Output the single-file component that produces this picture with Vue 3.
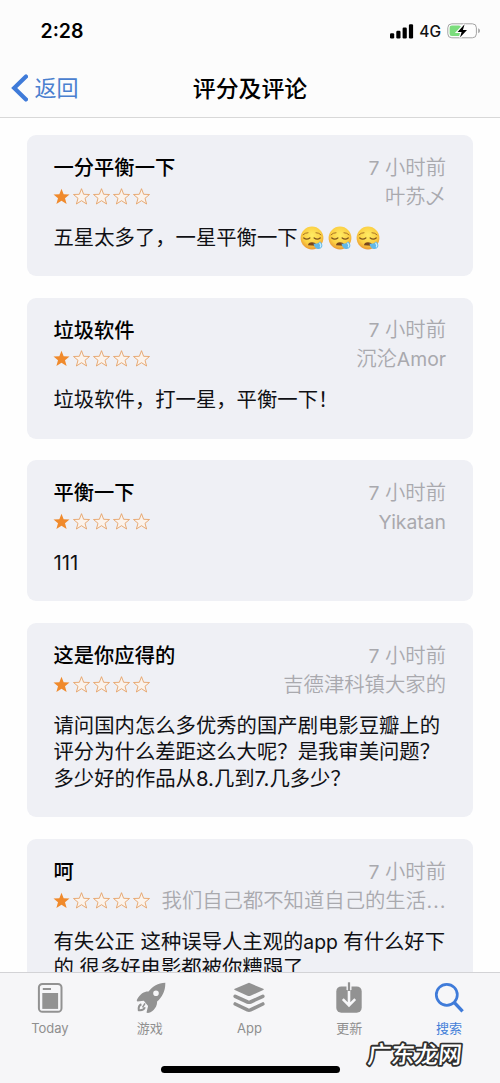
<script setup>
const star = 'M8 0.2 L10.15 5.8 L16 6 L11.5 9.8 L13.1 15.5 L8 12.2 L2.9 15.5 L4.5 9.8 L0 6 L5.85 5.8 Z'
const reviews = [
  { title: '一分平衡一下', author: '叶苏乄', lines: ['五星太多了，一星平衡一下'], faces: 3 },
  { title: '垃圾软件', author: '沉沦Amor', lines: ['垃圾软件，打一星，平衡一下！'], faces: 0 },
  { title: '平衡一下', author: 'Yikatan', lines: ['111'], faces: 0 },
  {
    title: '这是你应得的',
    author: '吉德津科镇大家的',
    lines: ['请问国内怎么多优秀的国产剧电影豆瓣上的', '评分为什么差距这么大呢？是我审美问题？', '多少好的作品从8.几到7.几多少？'],
    faces: 0,
  },
  {
    title: '呵',
    author: '我们自己都不知道自己的生活…',
    lines: ['有失公正 这种误导人主观的app 有什么好下', '的 很多好电影都被你糟蹋了'],
    faces: 0,
  },
]

// Latin words and the ellipsis are sized apart from the Chinese text around them.
function segments(text) {
  return text
    .split(/([A-Za-z]+ ?|…)/)
    .filter(Boolean)
    .map((t) => ({ t, kind: t === '…' ? 'dots' : /^[A-Za-z]/.test(t) ? 'latin' : '' }))
}
</script>

<template>
  <div class="screen">
    <header class="top">
      <div class="status">
        <span class="time">2:28</span>
        <div class="indicators">
          <svg class="signal" width="24" height="15" viewBox="0 0 24 15">
            <rect x="0" y="9.3" width="4.2" height="5.2" rx="1.2" />
            <rect x="6.3" y="6.8" width="4.2" height="7.7" rx="1.2" />
            <rect x="12.6" y="3.6" width="4.2" height="10.9" rx="1.2" />
            <rect x="18.9" y="0.2" width="4.2" height="14.3" rx="1.2" />
          </svg>
          <span class="network">4G</span>
          <svg class="battery" width="34" height="16" viewBox="0 0 34 16">
            <rect x="0.8" y="0.8" width="28.6" height="14" rx="4" fill="#fdfdfd" stroke="#a3a3a3" stroke-width="1" />
            <rect x="2.6" y="2.6" width="11.5" height="10.4" rx="2.2" fill="#7bdc7c" />
            <path d="M31.2 5.3 Q33 6 33 7.8 Q33 9.6 31.2 10.3 Z" fill="#a3a3a3" />
            <path d="M17.6 1.2 L10.6 8.9 H14.6 L13 14.4 L20 6.9 H15.9 Z" fill="#000" stroke="#fdfdfd" stroke-width="2.4" paint-order="stroke" />
          </svg>
        </div>
      </div>
      <nav class="nav">
        <div class="back">
          <svg width="18" height="28" viewBox="0 0 18 28">
            <path d="M16 2.6 L4.2 14 L16 25.4" fill="none" stroke="#3f7bd9" stroke-width="4.2" stroke-linecap="round" stroke-linejoin="miter" />
          </svg>
          <span>返回</span>
        </div>
        <h1>评分及评论</h1>
      </nav>
    </header>

    <main class="list">
      <article v-for="r in reviews" :key="r.title" class="card">
        <div class="row">
          <h2>{{ r.title }}</h2>
          <span class="meta"><span class="latin">7 </span>小时前</span>
        </div>
        <div class="row">
          <div class="stars">
            <svg v-for="n in 5" :key="n" width="17" height="17" viewBox="-0.5 -0.5 17 17">
              <path :d="star" :class="n === 1 ? 'full' : 'hollow'" />
            </svg>
          </div>
          <span class="meta"><span v-for="(s, i) in segments(r.author)" :key="i" :class="s.kind">{{ s.t }}</span></span>
        </div>
        <div class="body">
          <div v-for="line in r.lines" :key="line" class="line">
            <span class="copy"><span v-for="(s, i) in segments(line)" :key="i" :class="s.kind">{{ s.t }}</span></span>
            <svg v-for="n in r.faces" :key="n" class="face" width="24" height="24" viewBox="0 0 24 24">
              <defs>
                <radialGradient :id="'skin' + n" cx="50%" cy="38%" r="62%">
                  <stop offset="0" stop-color="#ffec64" />
                  <stop offset="0.65" stop-color="#fbcf43" />
                  <stop offset="1" stop-color="#ea9832" />
                </radialGradient>
              </defs>
              <circle cx="12" cy="12" r="11.4" :fill="'url(#skin' + n + ')'" />
              <path d="M3 8.8 Q5 6.7 8 6.7 M16 6.7 Q19 6.7 21 8.8" fill="none" stroke="#aa7425" stroke-width="1" stroke-linecap="round" />
              <path d="M3.8 12 Q6.7 14.3 9.8 12 M14.2 12 Q17.3 14.3 20.2 12" fill="none" stroke="#81551d" stroke-width="1.4" stroke-linecap="round" />
              <path d="M8 19.2 Q8.2 16.2 12 16.2 Q15 16.2 16 18 L15.3 19.8 Z" fill="#78451d" />
              <path d="M13.5 17.5 Q18.2 18.2 20 15.4 Q23.3 18 22 21 Q20.4 23.8 16.8 22.7 Q14 21.5 13.5 17.5 Z" fill="#62b8e8" />
              <path d="M19.8 17.2 Q21.5 19 20.4 20.8" fill="none" stroke="#c9eefd" stroke-width="1.3" stroke-linecap="round" />
            </svg>
          </div>
        </div>
      </article>
    </main>

    <footer class="tabs">
      <div class="tab">
        <svg width="32" height="32" viewBox="0 0 32 32">
          <rect x="4.9" y="2" width="22.6" height="27.8" rx="3.6" fill="none" stroke="#929292" stroke-width="2" />
          <rect x="8.3" y="11" width="15.8" height="15.9" fill="#929292" />
          <path d="M8.8 7 H17" stroke="#929292" stroke-width="2" />
        </svg>
        <span>Today</span>
      </div>
      <div class="tab">
        <svg width="32" height="32" viewBox="0 0 32 32">
          <path fill="#929292" fill-rule="evenodd" d="M31.3 0.8 C24 1.2 18.5 4.3 14.5 9.6 C10.5 9.4 6.5 11.2 2.7 18.2 L3.3 19.6 L9.8 18.8 L14.1 24 L12.5 30.6 C14.5 32.6 23.5 27.5 23.1 19.6 C28.2 15.2 31.5 8.8 31.3 0.8 Z M22 8.4 A2.8 2.8 0 1 0 22 14 A2.8 2.8 0 1 0 22 8.4 Z" />
          <path d="M7.4 22.2 Q4.1 23.5 4.8 28.2 Q9.7 28.8 10.8 25.2" fill="none" stroke="#929292" stroke-width="2" />
          <path d="M8.5 25.4 L11 21.4" stroke="#929292" stroke-width="1.5" />
        </svg>
        <span>游戏</span>
      </div>
      <div class="tab">
        <svg width="32" height="32" viewBox="0 0 32 32">
          <path d="M16 0.8 L30.2 6.8 Q31.4 7.4 30.2 8 L17.5 13.7 Q16 14.3 14.5 13.7 L1.8 8 Q0.6 7.4 1.8 6.8 Z" fill="#929292" />
          <path d="M2.2 14.3 L14.5 20 Q16 20.6 17.5 20 L29.8 14.3 M2.2 22 L14.5 27.9 Q16 28.5 17.5 27.9 L29.8 22" fill="none" stroke="#929292" stroke-width="3.6" stroke-linecap="round" />
        </svg>
        <span>App</span>
      </div>
      <div class="tab">
        <svg width="32" height="32" viewBox="0 0 32 32">
          <rect x="3.3" y="4.4" width="25.4" height="26.3" rx="5" fill="#929292" />
          <path d="M16 3.5 V8" stroke="#f7f7f9" stroke-width="5" />
          <path d="M16 8 V22.6 M9.8 17.2 L16 23.4 L22.2 17.2" fill="none" stroke="#f7f7f9" stroke-width="2.6" />
          <path d="M16 0.3 V9" stroke="#929292" stroke-width="2.2" />
        </svg>
        <span>更新</span>
      </div>
      <div class="tab active">
        <svg width="32" height="32" viewBox="0 0 32 32">
          <circle cx="13.8" cy="12.8" r="10.5" fill="none" stroke="#3f7bd9" stroke-width="2.7" />
          <path d="M21.4 20.6 L29.6 29.4" stroke="#3f7bd9" stroke-width="3.4" />
        </svg>
        <span>搜索</span>
      </div>
      <div class="home"></div>
      <svg class="mark" width="110" height="40" viewBox="0 0 110 40">
        <text x="9" y="28" textLength="94" transform="skewX(-6)">广东龙网</text>
      </svg>
    </footer>
  </div>
</template>

<style>
body {
  margin: 0;
  background: #fff;
}
</style>

<style scoped>
.screen {
  width: 500px;
  height: 1083px;
  overflow: hidden;
  display: flex;
  flex-direction: column;
  background: #fefefe;
  color: #101014;
  font-family: Inter, "Noto Sans CJK SC", sans-serif;
}
.top {
  flex: none;
  height: 117px;
  background: #fcfcfc;
  border-bottom: 1px solid #d8d8d8;
}
.status {
  height: 59px;
  box-sizing: border-box;
  padding: 3px 19px 0 40.5px;
  display: flex;
  align-items: center;
  justify-content: space-between;
}
.time {
  font-size: 19.5px;
  font-weight: 600;
  color: #000;
}
.indicators {
  display: flex;
  align-items: center;
}
.signal {
  margin-right: -1px;
}
.network {
  margin: 0 6px 0 6px;
  font-size: 15.5px;
  font-weight: 450;
  color: #111;
}
.nav {
  height: 58px;
  position: relative;
  display: flex;
  align-items: center;
  justify-content: center;
}
.back {
  position: absolute;
  left: 10px;
  top: 0;
  height: 58px;
  display: flex;
  align-items: center;
  gap: 6.5px;
  color: #4a80cf;
  font-size: 22px;
}
.back span,
h1 {
  line-height: 26px;
}
h1 {
  margin: 0;
  padding-top: 1px;
  font-size: 22.9px;
  font-weight: 500;
  color: #000;
}
.list {
  flex: 1;
  min-height: 0;
  overflow: hidden;
  padding: 17px 27px 0;
  display: flex;
  flex-direction: column;
  gap: 21.8px;
}
.card {
  flex: none;
  padding: 18px 27px 24.5px 26.5px;
  border-radius: 9px;
  background: #eff0f5;
  font-size: 20.35px;
}
.row {
  height: 29px;
  line-height: 29px;
  display: flex;
  align-items: center;
  justify-content: space-between;
  white-space: nowrap;
}
h2 {
  margin: 0;
  font-size: 20.3px;
  font-weight: 500;
  color: #000;
}
.meta {
  color: #a9a9ae;
  font-weight: 350;
  white-space: pre;
}
.latin {
  font-size: 0.95em;
  font-weight: 400;
}
.dots {
  font-size: 1.16em;
  line-height: 1px;
}
.stars {
  display: flex;
  gap: 3px;
  margin-left: -1px;
  padding-bottom: 1px;
}
.full {
  fill: #f08a2c;
}
.hollow {
  fill: #fbf3ec;
  stroke: #e5a167;
  stroke-width: 0.9;
}
.body {
  margin-top: 13.7px;
}
.line {
  height: 26.7px;
  line-height: 26.7px;
  display: flex;
  align-items: center;
  white-space: pre;
}
.face {
  margin-left: 2px;
  margin-right: 2px;
}
.tabs {
  position: relative;
  flex: none;
  height: 111px;
  box-sizing: border-box;
  border-top: 1px solid #d3d3d6;
  background: #f6f6f8;
  display: flex;
}
.tab {
  width: 99.8px;
  padding: 8.5px 0 0;
  display: flex;
  flex-direction: column;
  align-items: center;
  color: #8f8f8f;
  font-size: 13px;
  line-height: 20px;
}
.tab span {
  margin-top: 4px;
}
.active {
  color: #4380d8;
}
.home {
  position: absolute;
  left: 161px;
  top: 93px;
  width: 179px;
  height: 7px;
  border-radius: 4px;
  background: #000;
}
.mark {
  position: absolute;
  left: 361px;
  top: 62px;
}
.mark text {
  font-family: "Noto Sans CJK SC", sans-serif;
  font-size: 23.5px;
  font-weight: 500;
  fill: #fff;
  stroke: #303030;
  stroke-width: 3.6px;
  stroke-linejoin: round;
  paint-order: stroke;
}
</style>
